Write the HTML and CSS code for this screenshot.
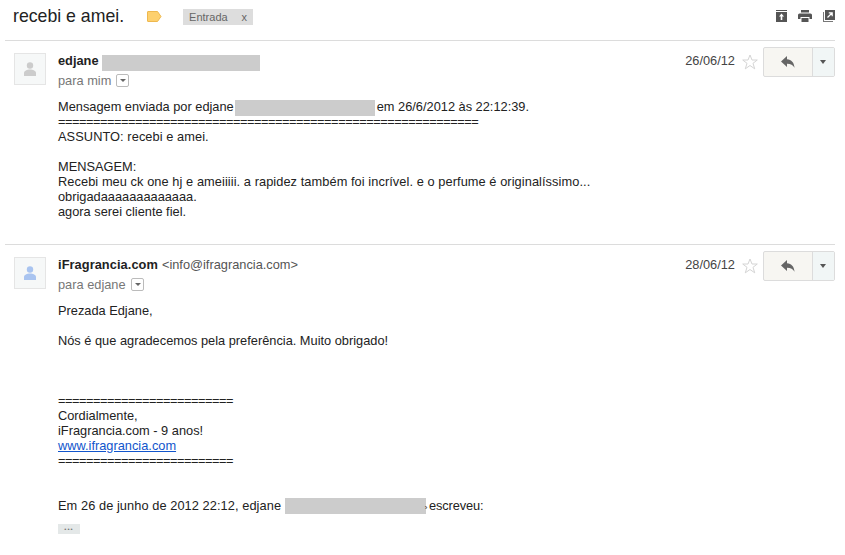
FILE: index.html
```html
<!DOCTYPE html>
<html>
  <head>
    <title>recebi e amei.</title>
    <link rel="stylesheet" href="styles.css">
  </head>
  <body>
    <div class="subject-bar">
      <h1 class="subject">recebi e amei.</h1>
      <svg class="tag-icon" width="15" height="11" viewBox="0 0 15 11"><path d="M1 .5h9.500L14 5.500l-3.500 5H1a.5.5 0 0 1-.5-.5V1A.5.5 0 0 1 1 .5z" fill="#fdd06e" stroke="#eeb84f"/></svg>
      <span class="label">Entrada<span class="label-x">x</span></span>
      <div class="top-icons">
        <svg width="11" height="12" viewBox="0 0 11 12"><path d="M0 0h11v1H0zM0 2h11v10H0z" fill="#555"/><path d="M5.500 3.500l2.500 3H6.300V10H4.700V6.500H3z" fill="#fff"/></svg>
        <svg width="14" height="12" viewBox="0 0 14 12"><path d="M3 0h8v2.500H3zM1.500 3.500h11A1.500 1.500 0 0 1 14 5v4h-2.500V7h-9v2H0V5a1.500 1.500 0 0 1 1.500-1.500zM3.500 8h7v4h-7z" fill="#555"/></svg>
        <svg width="12" height="12" viewBox="0 0 12 12"><path d="M0 2h1v9h9v1H0z" fill="#777"/><path d="M2 0h10v10H2z" fill="#555"/><path d="M4.500 7.500L9 3M5.800 2.800h3.400v3.400" stroke="#fff" stroke-width="1.200" fill="none"/></svg>
      </div>
    </div>

    <div class="message first">
      <div class="avatar">
        <svg width="12" height="14" viewBox="0 0 12 14"><circle cx="6" cy="3.500" r="3.200" fill="#ccc"/><path d="M0 14v-3c0-2 3-3.500 6-3.500s6 1.500 6 3.500v3z" fill="#ccc"/></svg>
      </div>
      <div class="message-main">
        <div class="message-head">
          <div class="sender-info">
            <div class="sender"><b>edjane</b><span class="redacted name-redacted"></span></div>
            <div class="recipient">para mim<span class="details-btn"></span></div>
          </div>
          <div class="message-actions">
            <span class="date">26/06/12</span>
            <svg class="star" width="16" height="16" viewBox="0 0 16 16"><path d="M8 1l2 5h5.300l-4.300 3.300 1.700 5.500L8 11.500l-4.700 3.300L5 9.300.7 6H6z" fill="#fff" stroke="#d4d4d4"/></svg>
            <div class="reply-group">
              <span class="reply-btn"><svg width="14" height="12" viewBox="0 0 14 12"><path d="M6 0v3.300c4.500.3 7 3.200 7.500 8.500-1.500-2.800-3.700-3.900-7.500-4V11L0 5.500z" fill="#666"/></svg></span>
              <span class="more-btn"></span>
            </div>
          </div>
        </div>
        <div class="message-body">
          <div>Mensagem enviada por edjane<span class="redacted inline-redacted"></span>em 26/6/2012 às 22:12:39.</div>
          <div class="rule">============================================================</div>
          <div class="loose">ASSUNTO: recebi e amei.</div>
          <br>
          <div>MENSAGEM:</div>
          <div class="loose">Recebi meu ck one hj e ameiiiii. a rapidez também foi incrível. e o perfume é originalíssimo...</div>
          <div>obrigadaaaaaaaaaaaaa.</div>
          <div>agora serei cliente fiel.</div>
        </div>
      </div>
    </div>

    <div class="message">
      <div class="avatar">
        <svg width="12" height="14" viewBox="0 0 12 14"><circle cx="6" cy="3.500" r="3.200" fill="#a9c4f0"/><path d="M0 14v-3c0-2 3-3.500 6-3.500s6 1.500 6 3.500v3z" fill="#a9c4f0"/></svg>
      </div>
      <div class="message-main">
        <div class="message-head">
          <div class="sender-info">
            <div class="sender"><b class="site-name">iFragrancia.com</b> <span class="address">&lt;info@ifragrancia.com&gt;</span></div>
            <div class="recipient">para edjane<span class="details-btn"></span></div>
          </div>
          <div class="message-actions">
            <span class="date">28/06/12</span>
            <svg class="star" width="16" height="16" viewBox="0 0 16 16"><path d="M8 1l2 5h5.300l-4.300 3.300 1.700 5.500L8 11.500l-4.700 3.300L5 9.300.7 6H6z" fill="#fff" stroke="#d4d4d4"/></svg>
            <div class="reply-group">
              <span class="reply-btn"><svg width="14" height="12" viewBox="0 0 14 12"><path d="M6 0v3.300c4.500.3 7 3.200 7.500 8.500-1.500-2.800-3.700-3.900-7.500-4V11L0 5.500z" fill="#666"/></svg></span>
              <span class="more-btn"></span>
            </div>
          </div>
        </div>
        <div class="message-body">
          <div>Prezada Edjane,</div>
          <br>
          <div>Nós é que agradecemos pela preferência. Muito obrigado!</div>
          <br><br><br>
          <div class="rule">=========================</div>
          <div>Cordialmente,</div>
          <div>iFragrancia.com - 9 anos!</div>
          <div><a href="#">www.ifragrancia.com</a></div>
          <div class="rule">=========================</div>
          <br><br>
          <div><span class="loose">Em 26 de junho de 2012 22:12, edjane </span><span class="redacted quote-redacted"></span><span class="quote-arrow">&rsaquo;</span> <span class="quote-tail">escreveu:</span></div>
          <div class="quote-toggle">&#8226;&#8226;&#8226;</div>
        </div>
      </div>
    </div>
  </body>
</html>
```

FILE: styles.css
```css
body {
  margin: 0;
  background-color: #ffffff;
  font-family: "Liberation Sans", Arial, sans-serif;
  font-size: 12.8px;
  color: #222222;
}

/* Subject row */
.subject-bar {
  display: flex;
  align-items: center;
  height: 41px;
  margin: 0 10px 0 5px;
  padding: 0 0 8px 8px;
  box-sizing: border-box;
  border-bottom: 1px solid #dcdcdc;
}

.subject {
  margin: 0;
  font-size: 17.7px;
  font-weight: normal;
}

.tag-icon {
  margin-left: 23px;
}

.label {
  display: flex;
  justify-content: space-between;
  width: 70px;
  height: 16px;
  margin: 1px 0 0 21px;
  padding: 0 6px;
  box-sizing: border-box;
  background-color: #dddddd;
  color: #666666;
  font-size: 11px;
  line-height: 16px;
}

.top-icons {
  display: flex;
  align-items: center;
  gap: 11px;
  margin-left: auto;
}

/* Messages */
.message {
  display: flex;
  margin: 0 10px 0 5px;
  padding: 12px 0 0 9px;
  border-top: 1px solid #dcdcdc;
}

.message.first {
  height: 191px;
  border-top: none;
}

.avatar {
  display: flex;
  align-items: center;
  justify-content: center;
  flex: none;
  width: 30px;
  height: 30px;
  border: 1px solid #e5e5e5;
  background-color: #f6f8f8;
}

.message-main {
  flex: 1;
  margin-left: 12px;
}

.message-head {
  display: flex;
  justify-content: space-between;
  height: 46px;
}

.sender {
  display: flex;
  align-items: center;
  gap: 4px;
  height: 16px;
  line-height: 16px;
}

.site-name {
  letter-spacing: 0.07px;
}

.address {
  color: #555555;
}

.recipient {
  display: flex;
  align-items: center;
  margin-top: 4px;
  color: #777777;
}

.details-btn {
  position: relative;
  width: 11px;
  height: 11px;
  margin-left: 5px;
  border: 1px solid #bbbbbb;
  border-radius: 2px;
}

.details-btn::after {
  content: "";
  position: absolute;
  top: 4px;
  left: 3px;
  border: 3px solid transparent;
  border-top: 3px solid #666666;
  border-bottom: none;
}

.redacted {
  display: inline-block;
  height: 16px;
  background-color: #cccccc;
  vertical-align: top;
}

.name-redacted {
  width: 158px;
  margin: 3px 0 0 -1px;
}

.inline-redacted {
  width: 140px;
  margin: 1px 2px -2px 1px;
}

.quote-redacted {
  width: 141px;
  margin: 0 0 -1px 0;
}

.quote-arrow {
  margin-left: -1px;
  font-size: 8px;
}

.quote-tail {
  margin-left: -2px;
  letter-spacing: -0.1px;
}

.message-actions {
  display: flex;
  align-items: flex-start;
}

.date {
  color: #444444;
  line-height: 16px;
}

.star {
  margin: 1px 5px 0 7px;
}

.reply-group {
  display: flex;
  height: 28px;
  margin-top: -6px;
  border: 1px solid #dcdcdc;
  border-radius: 2px;
  background-color: #f7f6f2;
}

.reply-btn {
  display: flex;
  align-items: center;
  justify-content: center;
  width: 48px;
  border-right: 1px solid #dcdcdc;
}

.more-btn {
  position: relative;
  width: 21px;
  background-color: #f1f6f6;
}

.more-btn::after {
  content: "";
  position: absolute;
  top: 12px;
  left: 7px;
  border: 3px solid transparent;
  border-top: 4px solid #555555;
  border-bottom: none;
}

/* Message text */
.message-body {
  line-height: 15px;
}

.message-body a {
  color: #1155cc;
}

.loose {
  letter-spacing: 0.07px;
}

.rule {
  letter-spacing: -0.47px;
  white-space: nowrap;
}

.quote-toggle {
  width: 22px;
  height: 10px;
  margin-top: 9px;
  background-color: #e4e8e8;
  color: #777777;
  font-size: 6px;
  letter-spacing: 1px;
  line-height: 10px;
  text-align: center;
}
```
